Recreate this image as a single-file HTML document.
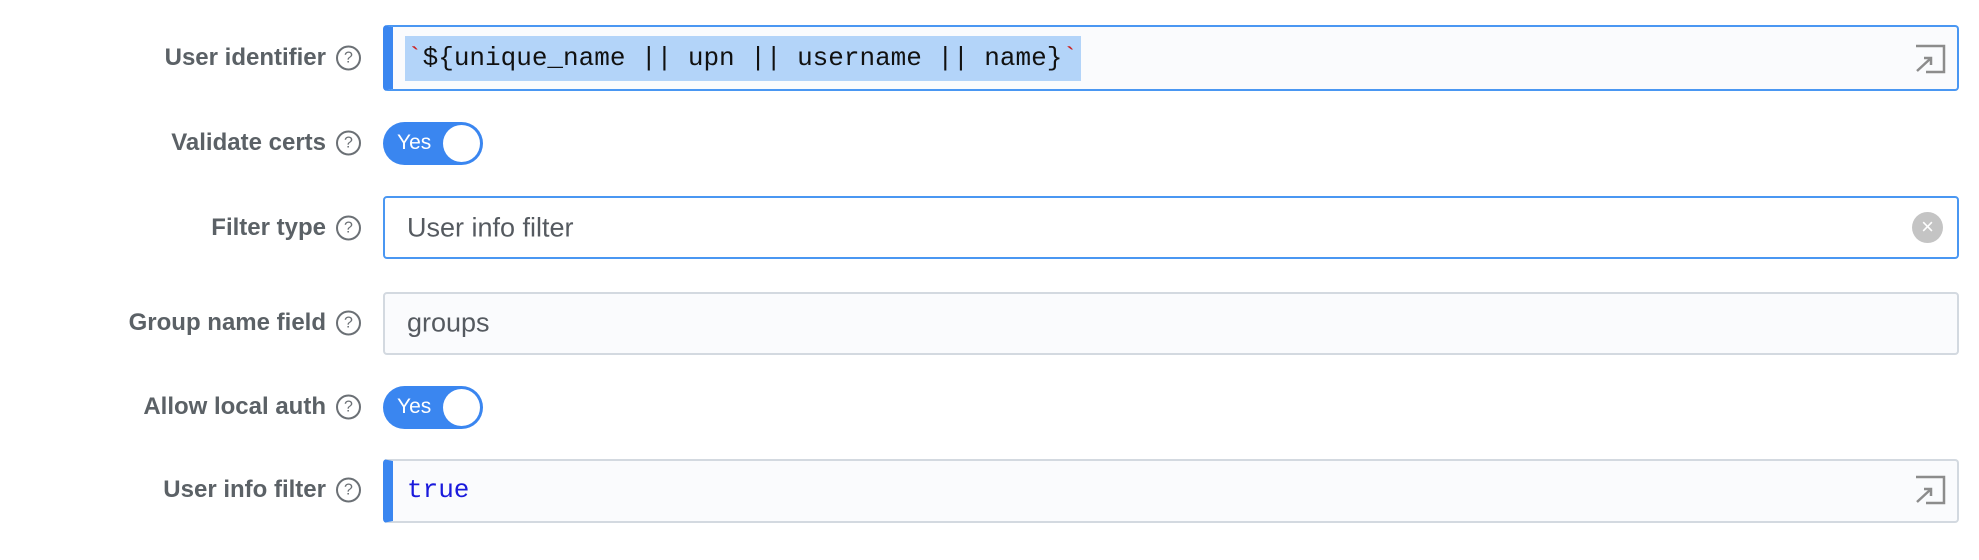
<!DOCTYPE html>
<html><head><style>
body{margin:0;width:1979px;height:560px;background:#fff;font-family:"Liberation Sans",sans-serif;position:relative;overflow:hidden}
.lbl{position:absolute;right:1653px;font-size:24px;font-weight:bold;color:#5b6166;white-space:nowrap;transform:translateY(-50%)}
.help{position:absolute;left:336px;width:21px;height:21px;border:2px solid #6b7075;border-radius:50%;font-size:16px;color:#6b7075;text-align:center;line-height:21px;transform:translateY(-50%);font-weight:normal}
.box{position:absolute;left:383px;width:1576px;box-sizing:border-box;border-radius:4px;background:#fafbfd}
.txt{position:absolute;font-size:27px;color:#555a60;transform:translateY(-50%)}
.mono{font-family:"Liberation Mono","DejaVu Sans Mono",monospace;font-size:26px}
.tog{position:absolute;left:383px;width:100px;height:43px;border-radius:22px;background:#3a86f0}
.tog span{position:absolute;left:14px;top:9px;color:#fff;font-size:21px}
.tog i{position:absolute;right:3px;top:3px;width:37px;height:37px;border-radius:50%;background:#fff}
</style></head><body>

<div class="lbl" style="top:58px">User identifier</div><div class="help" style="top:58px">?</div>
<div class="box" style="top:25px;height:66px;border:2px solid #4a97f2;border-left:10px solid #3a86f0"></div>
<div style="position:absolute;left:405px;top:36px;width:676px;height:45px;background:#b3d4f9"></div>
<div class="txt mono" style="left:407px;top:58px;color:#111"><span style="color:#c22">`</span>${unique_name || upn || username || name}<span style="color:#c22">`</span></div>
<svg style="position:absolute;left:1914px;top:44px" width="32" height="30" viewBox="0 0 32 30"><path d="M2 2H30V28H12" fill="none" stroke="#8c8c8c" stroke-width="2.5"/><path d="M3 27L16 15M10 14H17V21" fill="none" stroke="#8c8c8c" stroke-width="2.5"/></svg>

<div class="lbl" style="top:143px">Validate certs</div><div class="help" style="top:143px">?</div>
<div class="tog" style="top:122px"><span>Yes</span><i></i></div>

<div class="lbl" style="top:228px">Filter type</div><div class="help" style="top:228px">?</div>
<div class="box" style="top:196px;height:63px;border:2px solid #4a97f2;background:#fff"></div>
<div class="txt" style="left:407px;top:228px">User info filter</div>
<div style="position:absolute;left:1912px;top:212px;width:31px;height:31px;border-radius:50%;background:#c4c4c4;color:#fff;font-size:22px;text-align:center;line-height:30px">×</div>

<div class="lbl" style="top:323px">Group name field</div><div class="help" style="top:323px">?</div>
<div class="box" style="top:292px;height:63px;border:2px solid #d3d9e0"></div>
<div class="txt" style="left:407px;top:323px">groups</div>

<div class="lbl" style="top:407px">Allow local auth</div><div class="help" style="top:407px">?</div>
<div class="tog" style="top:386px"><span>Yes</span><i></i></div>

<div class="lbl" style="top:490px">User info filter</div><div class="help" style="top:490px">?</div>
<div class="box" style="top:459px;height:64px;border:2px solid #d3d9e0;border-left:10px solid #3a86f0"></div>
<div class="txt mono" style="left:407px;top:490px;color:#1a1adc">true</div>
<svg style="position:absolute;left:1914px;top:475px" width="32" height="30" viewBox="0 0 32 30"><path d="M2 2H30V28H12" fill="none" stroke="#8c8c8c" stroke-width="2.5"/><path d="M3 27L16 15M10 14H17V21" fill="none" stroke="#8c8c8c" stroke-width="2.5"/></svg>
</body></html>
